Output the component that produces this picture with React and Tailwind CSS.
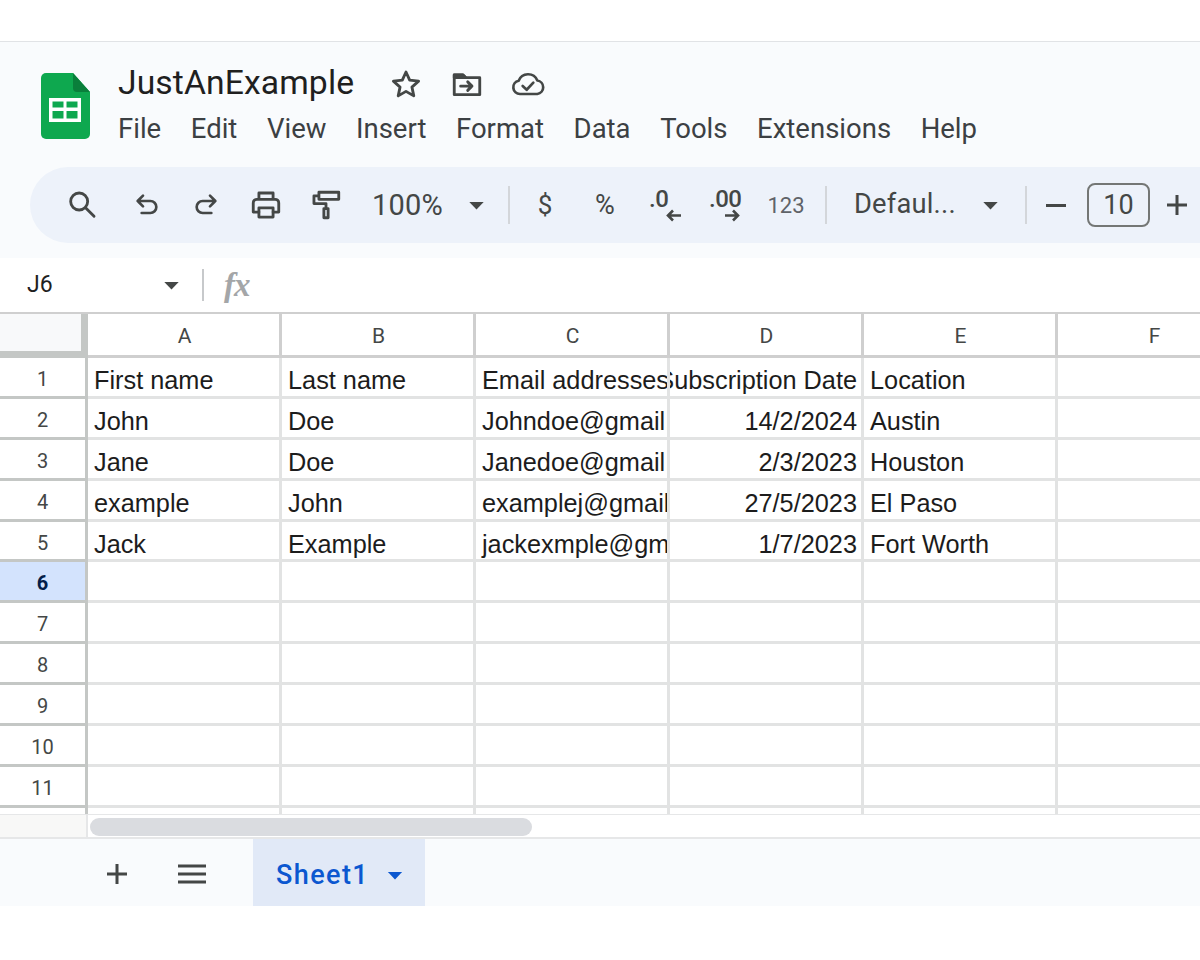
import React from 'react';

const menus = ['File', 'Edit', 'View', 'Insert', 'Format', 'Data', 'Tools', 'Extensions', 'Help'];
const columns = ['A', 'B', 'C', 'D', 'E', 'F'];
const rows = [
  ['First name', 'Last name', 'Email addresses', 'Subscription Date', 'Location', ''],
  ['John', 'Doe', 'Johndoe@gmail.com', '14/2/2024', 'Austin', ''],
  ['Jane', 'Doe', 'Janedoe@gmail.com', '2/3/2023', 'Houston', ''],
  ['example', 'John', 'examplej@gmail.com', '27/5/2023', 'El Paso', ''],
  ['Jack', 'Example', 'jackexmple@gmail.com', '1/7/2023', 'Fort Worth', ''],
  ['', '', '', '', '', ''],
  ['', '', '', '', '', ''],
  ['', '', '', '', '', ''],
  ['', '', '', '', '', ''],
  ['', '', '', '', '', ''],
  ['', '', '', '', '', ''],
  ['', '', '', '', '', ''],
];

function Caret({ color = '#444746', size = 'w-[18px] h-[10px]' }) {
  return (
    <svg className={size} viewBox="0 0 18 10">
      <path d="M1 1h16L9 9.5z" fill={color} />
    </svg>
  );
}

function Divider() {
  return <div className="w-[2px] h-[38px] bg-[#d3d6da]"></div>;
}

function Slot({ className = 'w-[60px]', children }) {
  return <div className={`${className} flex items-center justify-center shrink-0`}>{children}</div>;
}

function Icon({ size = 'w-[32px] h-[32px]', children }) {
  return (
    <svg className={size} viewBox="0 0 24 24" fill="none" stroke="#444746" strokeWidth="2" strokeLinejoin="round" strokeLinecap="round">
      {children}
    </svg>
  );
}

function DecimalIcon({ label, arrow }) {
  return (
    <div className="relative w-[40px] h-[40px] font-['Roboto',sans-serif] text-[#444746]">
      <span className="absolute left-[4px] top-0 text-[24px] font-medium leading-[28px] whitespace-nowrap tracking-[-0.5px]">{label}</span>
      <svg className="absolute right-[4px] top-[24px] w-[16px] h-[13px]" viewBox="0 0 16 13" fill="none" stroke="#444746" strokeWidth="2.6">
        {arrow === 'left' ? <path d="M16 6.500H3M8 1.500l-5 5 5 5" /> : <path d="M0 6.500h13M8 1.500l5 5-5 5" />}
      </svg>
    </div>
  );
}

export default function App() {
  return (
    <div className="w-[1200px] h-[960px] bg-white overflow-hidden flex flex-col font-['Roboto',sans-serif]">
      <div className="h-[41px] shrink-0"></div>

      {/* Title + menus */}
      <div className="h-[217px] shrink-0 bg-[#f9fbfd] border-t border-[#e1e3e6] flex flex-col">
        <div className="h-[125px] shrink-0 flex pl-[41px] pt-[22px]">
          <svg className="w-[49px] h-[66px] mt-[9px] shrink-0" viewBox="0 0 49 66">
            <path d="M5 0h27l17 19v42a5 5 0 0 1-5 5H5a5 5 0 0 1-5-5V5a5 5 0 0 1 5-5z" fill="#0ea84f" />
            <path d="M32 0l17 19H36a4 4 0 0 1-4-4z" fill="#0a7f3b" />
            <path d="M8 25h32v24H8zM11.500 28.500v6h11v-6zM25.500 28.500v6h11v-6zM11.500 38v7.500h11V38zM25.500 38v7.500h11V38z" fill="#fff" fillRule="evenodd" />
          </svg>
          <div className="ml-[28px] flex flex-col">
            <div className="flex items-center h-[38px]">
              <span className="text-[33.700px] leading-[38px] text-[#1f1f1f] tracking-[0.1px] w-[236px] whitespace-nowrap">JustAnExample</span>
              <div className="ml-[35px] flex items-center gap-[27px] mt-[2px]">
                <Icon size="w-[34px] h-[34px]">
                  <path d="M12 3.500l2.600 5.800 6.300.7-4.700 4.200 1.300 6.200-5.500-3.200-5.500 3.200 1.300-6.200L3.100 10l6.300-.7z" />
                </Icon>
                <Icon size="w-[34px] h-[34px]">
                  <path d="M3 19.500V5.500h6l2 2h10v12z" />
                  <path d="M3 5.500h6l2 2H3z" fill="#444746" />
                  <path d="M7.500 13.500h8M12.500 10.500l3 3-3 3" />
                </Icon>
                <svg className="w-[36px] h-[32px] -ml-[1px]" viewBox="0 0 27 24" fill="none" stroke="#444746" strokeWidth="2" strokeLinejoin="round" strokeLinecap="round">
                  <path d="M7.500 19.500a5 5 0 0 1-1-9.900 7.500 7.500 0 0 1 14-.2 5.100 5.100 0 0 1 0 10.100z" />
                  <path d="M9.500 13.500l3 2.800 5-5.300" />
                </svg>
              </div>
            </div>
            <div className="mt-[11px] flex gap-[29.600px] text-[27.500px] leading-[32px] text-[#3c4043]">
              {menus.map((m) => (
                <span key={m}>{m}</span>
              ))}
            </div>
          </div>
        </div>

        {/* Toolbar */}
        <div className="h-[76px] ml-[30px] w-[1200px] shrink-0 rounded-l-[38px] bg-[#edf2fa] flex items-center pl-[22px] text-[#444746]">
          <Slot>
            <Icon size="w-[34px] h-[34px]">
              <circle cx="10" cy="9.500" r="6" />
              <path d="M14.500 14l6 6" />
            </Icon>
          </Slot>
          <Slot className="w-[60px] ml-[5px]">
            <Icon>
              <path d="M9 5 5 9l4 4M5 9h9.500a4.500 4.500 0 0 1 0 9H8" />
            </Icon>
          </Slot>
          <Slot className="w-[60px] -ml-[1px]">
            <Icon>
              <path d="M15 5l4 4-4 4M19 9H9.500a4.500 4.500 0 0 0 0 9H16" />
            </Icon>
          </Slot>
          <Slot>
            <Icon size="w-[34px] h-[34px]">
              <path d="M7 8V3.500h10V8M7 17H3v-6.500A2.500 2.500 0 0 1 5.500 8h13a2.500 2.500 0 0 1 2.500 2.500V17h-4" />
              <path d="M7 14h10v6.500H7z" />
            </Icon>
          </Slot>
          <Slot>
            <Icon size="w-[34px] h-[34px]">
              <path d="M7 3h14v5H7zM7 5.500H3.500v5.500H12v3.500" />
              <path d="M10.500 14.500h3V21h-3z" />
            </Icon>
          </Slot>
          <span className="ml-[16px] w-[70px] text-[29px] leading-none tracking-[0.2px] shrink-0">100%</span>
          <Slot className="w-[18px] ml-[25px]"><Caret size="w-[17px] h-[9px]" /></Slot>
          <div className="ml-[23px]"><Divider /></div>
          <Slot className="w-[60px] ml-[5px] text-[26px]">$</Slot>
          <Slot className="w-[60px] text-[27px]">%</Slot>
          <Slot><DecimalIcon label=".0" arrow="left" /></Slot>
          <Slot><DecimalIcon label=".00" arrow="right" /></Slot>
          <Slot className="w-[62px] text-[22px] text-[#5f6368]">123</Slot>
          <div className="ml-[8px]"><Divider /></div>
          <span className="ml-[27px] w-[102px] text-[27.300px] leading-none tracking-[0.2px] whitespace-nowrap shrink-0">Defaul...</span>
          <Slot className="w-[18px] ml-[25px]"><Caret size="w-[17px] h-[9px]" /></Slot>
          <div className="ml-[26px]"><Divider /></div>
          <div className="ml-[19px] w-[20px] h-[3px] bg-[#444746] shrink-0"></div>
          <div className="ml-[21px] w-[63px] h-[44px] shrink-0 rounded-[8px] border-2 border-[#747775] flex items-center justify-center text-[27px]">10</div>
          <svg className="ml-[16px] w-[22px] h-[22px] shrink-0" viewBox="0 0 22 22" fill="none" stroke="#444746" strokeWidth="3">
            <path d="M1 11h20M11 1v20" />
          </svg>
        </div>
      </div>

      {/* Formula bar */}
      <div className="h-[54px] shrink-0 flex items-center pl-[27px] bg-white">
        <span className="w-[136px] text-[23px] text-[#1f1f1f]">J6</span>
        <Caret size="w-[17px] h-[9px]" />
        <div className="ml-[22px] w-[2px] h-[32px] bg-[#c7c9cb]"></div>
        <span className="ml-[20px] font-['Liberation_Serif',serif] italic font-bold text-[33px] text-[#a4a6a8] leading-none tracking-[-1px]">fx</span>
      </div>

      {/* Grid */}
      <div className="h-[502px] shrink-0 overflow-hidden flex flex-col">
        <div className="h-[46px] shrink-0 flex border-t-2 border-b-[3px] border-[#cfcfcf]">
          <div className="w-[88px] h-[44px] shrink-0 bg-[#f8f9fa] border-r-[7px] border-b-[7px] border-[#c4c7c5]"></div>
          {columns.map((c) => (
            <div key={c} className="w-[194px] shrink-0 pt-[4px] pl-[2px] flex items-center justify-center border-r-[3px] border-[#cfcfcf] text-[21px] text-[#444746]">
              {c}
            </div>
          ))}
        </div>
        {rows.map((row, i) => (
          <div key={i} className="h-[40.900px] shrink-0 flex">
            <div
              className={`w-[88px] shrink-0 pt-[4px] flex items-center justify-center border-r-[3px] border-b-[3px] border-[#c4c7c5] text-[20px] ${i === 5 ? 'bg-[#d3e3fd] font-bold text-[#041e49]' : 'bg-white text-[#444746]'}`}
            >
              {i + 1}
            </div>
            {columns.map((c, j) => (
              <div
                key={c}
                className={`w-[194px] shrink-0 pt-[8px] overflow-hidden whitespace-nowrap flex items-center border-r-[3px] border-b-[3px] border-[#e2e3e3] font-['Liberation_Sans',sans-serif] text-[25.300px] text-[#1c1c1c] ${j === 3 ? 'justify-end pr-[4px]' : 'pl-[6px]'}`}
              >
                <span className="shrink-0">{row[j]}</span>
              </div>
            ))}
          </div>
        ))}
      </div>

      {/* Horizontal scrollbar */}
      <div className="h-[25px] shrink-0 flex border-t border-b-2 border-[#e6e7e8] bg-white">
        <div className="w-[88px] shrink-0 bg-[#f8f8f7] border-r-2 border-[#e6e7e8]"></div>
        <div className="ml-[2px] mt-[3px] w-[442px] h-[18px] rounded-full bg-[#dadce0]"></div>
      </div>

      {/* Sheet tabs */}
      <div className="h-[67px] shrink-0 bg-[#f9fbfd] flex items-center pl-[106px]">
        <svg className="w-[22px] h-[22px] mt-[3px] shrink-0" viewBox="0 0 22 22" fill="none" stroke="#444746" strokeWidth="3">
          <path d="M1 11h20M11 1v20" />
        </svg>
        <svg className="ml-[50px] mt-[3px] w-[28px] h-[20px] shrink-0" viewBox="0 0 28 20" fill="none" stroke="#444746" strokeWidth="3">
          <path d="M0 2h28M0 10h28M0 18h28" />
        </svg>
        <div className="ml-[47px] w-[172px] h-[67px] pt-[6px] bg-[#e1e9f7] flex items-center pl-[23px]">
          <span className="w-[91px] text-[27px] font-medium text-[#0b57d0] tracking-[1.400px] whitespace-nowrap">Sheet1</span>
          <div className="ml-[20px]"><Caret color="#0b57d0" size="w-[16px] h-[9px]" /></div>
        </div>
      </div>
    </div>
  );
}
